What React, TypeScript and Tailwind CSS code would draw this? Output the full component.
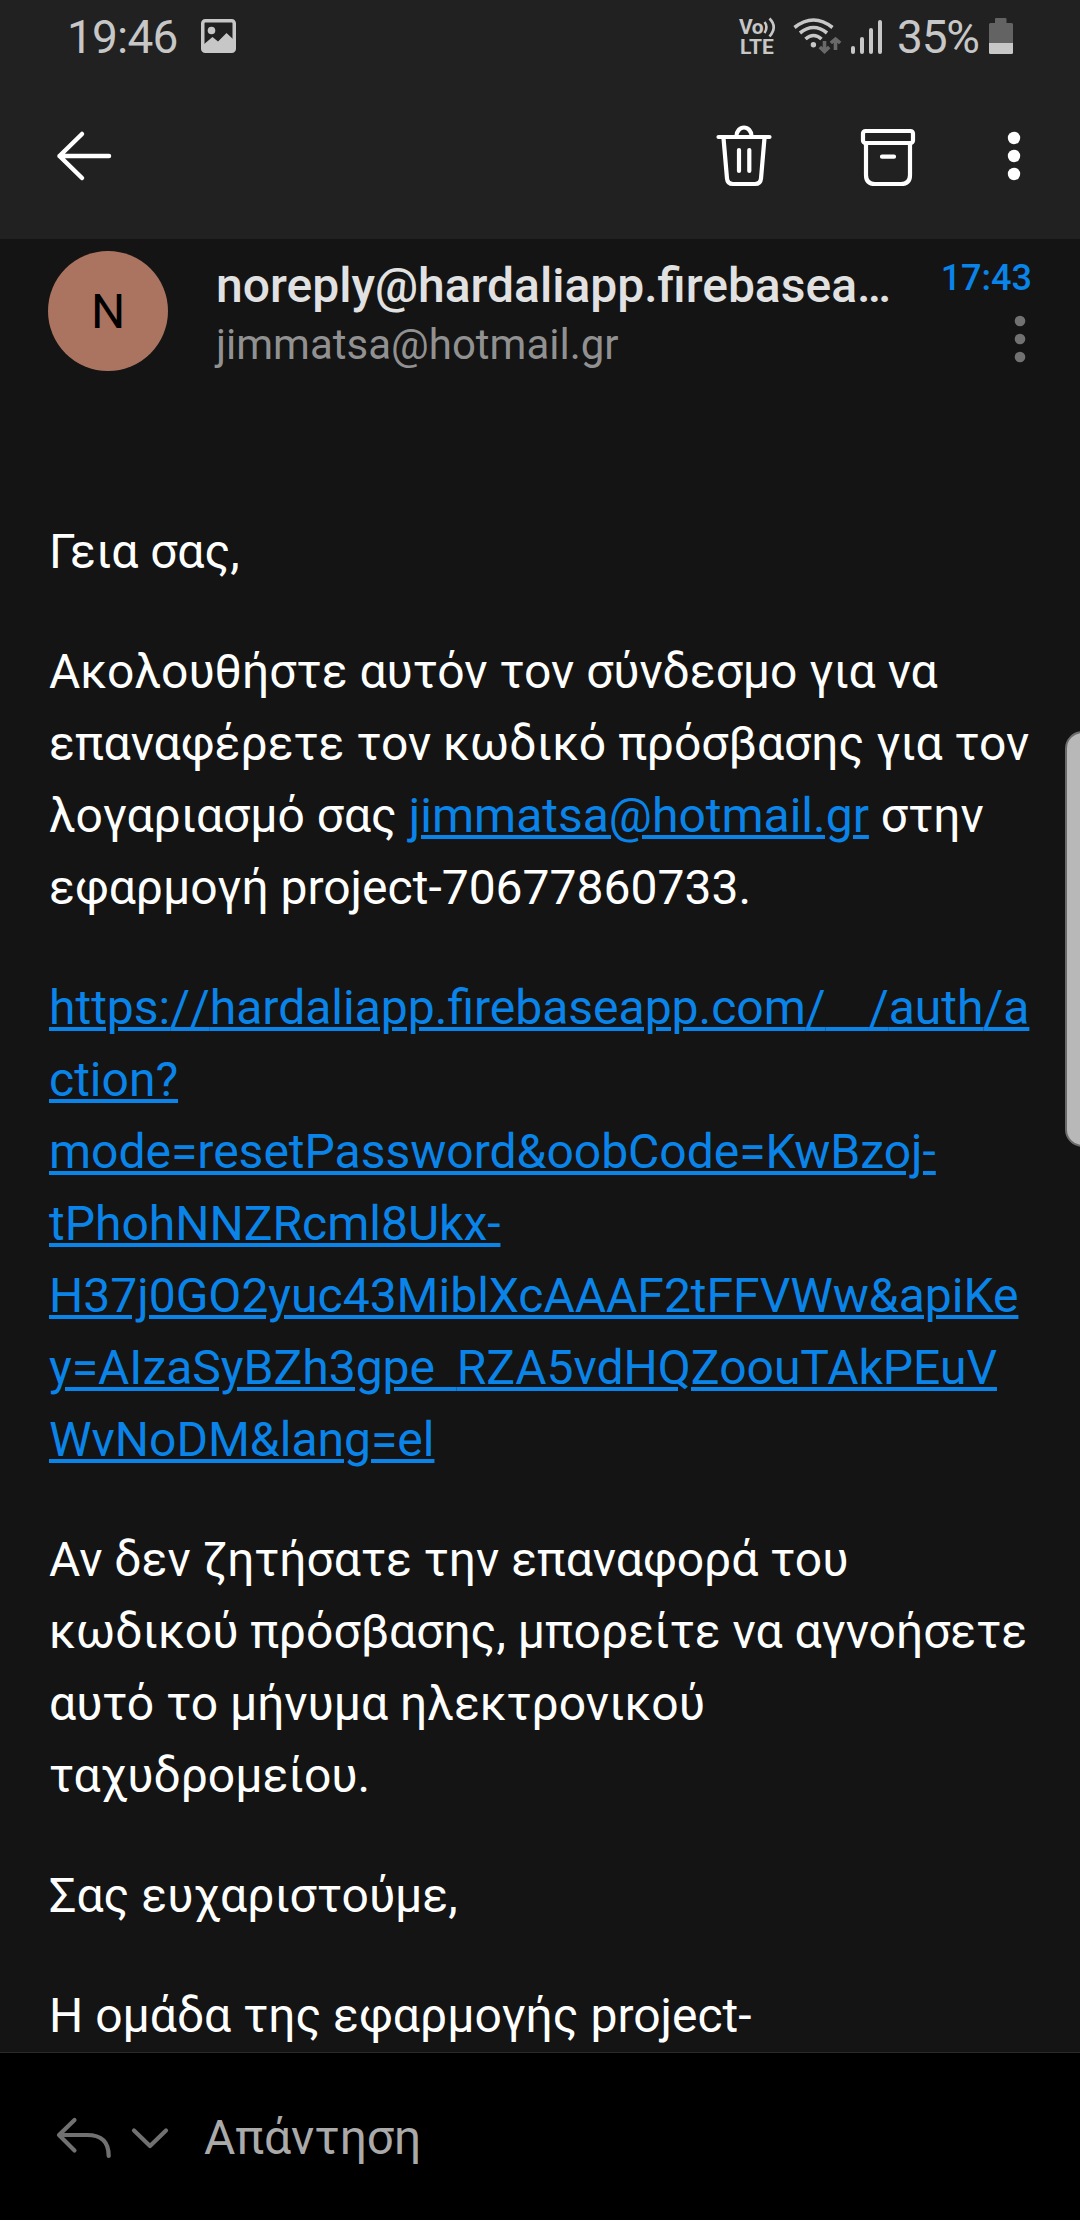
import React from "react";

function StatusBar() {
  return (
    <div className="flex h-[76px] items-start text-[#c7c7c7]">
      <span className="ml-[67px] mt-[10px] w-[134px] text-[46px] leading-[54px] tracking-[-0.800px]">19:46</span>
      <svg className="mt-[19px]" width="35" height="34" viewBox="0 0 35 34">
        <rect x="1.75" y="1.75" width="31.5" height="30.5" rx="2.5" fill="none" stroke="#c7c7c7" strokeWidth="3.5" />
        <circle cx="10.5" cy="11.5" r="3.8" fill="#c7c7c7" />
        <path d="M2 26L11.500 18L17 22.500L25.500 14L33 21V32H2Z" fill="#c7c7c7" />
      </svg>
      <div className="ml-[503px] mt-[17px] w-[54px]">
        <div className="flex h-[21px] items-start">
          <span className="mt-px w-[24px] text-[21px] font-bold leading-[19px] tracking-[-0.600px]">Vo</span>
          <svg width="13" height="21" viewBox="0 0 13 21" fill="none" stroke="#c7c7c7" strokeWidth="2.6">
            <path d="M1.500 5Q5.500 10 1.500 16" />
            <path d="M6.500 1.500Q14.900 10 6.500 19.500" />
          </svg>
        </div>
        <div className="ml-px text-[21px] font-bold leading-[18px]">LTE</div>
      </div>
      <svg className="mt-[17px]" width="50" height="38" viewBox="0 0 50 38" fill="none" stroke="#c7c7c7" strokeWidth="3.6">
        <path d="M1.500 10.500Q20.500 -4.500 39.500 10.500" />
        <path d="M7 16Q20.500 5 34 16" />
        <path d="M12.500 22Q20.500 15 28.500 22" />
        <circle cx="20.400" cy="27.700" r="2.700" fill="#c7c7c7" stroke="none" />
        <path d="M31.500 24V34M26.800 30L31.500 34.500L36.200 30" stroke="#696969" />
        <path d="M42.500 33V23M37.800 26L42.500 22L47.200 26" stroke="#696969" />
      </svg>
      <svg className="ml-[7px] mt-[19px]" width="33" height="36" viewBox="0 0 33 36" stroke="#c7c7c7" strokeWidth="4" strokeLinecap="round">
        <path d="M3 29V33M12 20V33M21 11V33M30 3V33" />
      </svg>
      <span className="ml-[14px] mt-[10px] w-[92px] text-[46px] leading-[54px] tracking-[-1.200px]">35%</span>
      <svg className="mt-[18px] shrink-0" width="24" height="36" viewBox="0 0 24 36">
        <path d="M0 25V6.500Q0 5 1.500 5H6V1Q6 0 7 0H16.500Q17.500 0 17.500 1V5H22.500Q24 5 24 6.500V25Z" fill="#636363" />
        <path d="M0 25H24V34.500Q24 36 22.500 36H1.500Q0 36 0 34.500Z" fill="#c7c7c7" />
      </svg>
    </div>
  );
}

function Toolbar() {
  return (
    <div className="flex h-[163px] items-start pt-[46px]">
      <svg className="ml-[52px]" width="64" height="68" viewBox="52 122 64 68" fill="none" stroke="#fff" strokeWidth="4.500" strokeLinecap="round" strokeLinejoin="round">
        <path d="M109 156H59.500M82 134L59.500 156L82 178" />
      </svg>
      <svg className="ml-[596px]" width="64" height="68" viewBox="712 122 64 68" fill="none" stroke="#fff" strokeWidth="4.200" strokeLinecap="round" strokeLinejoin="round">
        <path d="M718.500 137H769.500M736.500 136A7.500 8.500 0 0 1 751.500 136M723.500 138L727 178.500Q727.500 184 733 184H755Q760.500 184 761 178.500L764.500 138M739 150V171M749.300 150V171" />
      </svg>
      <svg className="ml-[80px]" width="64" height="68" viewBox="856 122 64 68" fill="none" stroke="#fff" strokeWidth="4.200" strokeLinecap="round" strokeLinejoin="round">
        <rect x="863" y="131" width="50" height="12" rx="2.500" />
        <path d="M866 143V175Q866 184 875 184H901Q910 184 910 175V143M882 156.700H894" />
      </svg>
      <svg className="ml-[84px]" width="20" height="68" viewBox="1004 122 20 68" fill="#fff">
        <circle cx="1014" cy="138" r="6.200" />
        <circle cx="1014" cy="156" r="6.200" />
        <circle cx="1014" cy="174" r="6.200" />
      </svg>
    </div>
  );
}

function SenderRow() {
  return (
    <div className="flex h-[277px] items-start pl-[48px] pr-[48px] pt-[12px]">
      <div className="flex size-[120px] shrink-0 items-center justify-center rounded-full bg-[#ab7460] pt-[2px] text-[48px] text-black">N</div>
      <div className="ml-[48px] mt-[7px] w-[690px] shrink-0">
        <div className="whitespace-nowrap text-[48px] font-medium leading-[56px] text-[#e1e1e1]">noreply@hardaliapp.firebasea…</div>
        <div className="mt-[6px] text-[42px] leading-[50px] text-[#919191]">jimmatsa@hotmail.gr</div>
      </div>
      <div className="ml-auto mt-[6px] flex flex-col items-end">
        <span className="text-[36px] font-medium leading-[42px] text-[#0a84e8]">17:43</span>
        <svg className="mr-[6px] mt-[11px]" width="12" height="54" viewBox="0 0 12 54" fill="#717171">
          <circle cx="6" cy="11" r="5.300" />
          <circle cx="6" cy="29" r="5.300" />
          <circle cx="6" cy="47" r="5.300" />
        </svg>
      </div>
    </div>
  );
}

const LINK = "text-[#0a84e8] underline decoration-[4px] underline-offset-[3px]";

function MessageBody() {
  return (
    <div className="flex flex-col gap-[48px] whitespace-nowrap pl-[49px] text-[48px] leading-[72px] text-white">
      <p>Γεια σας,</p>
      <p>
        Ακολουθήστε αυτόν τον σύνδεσμο για να<br />
        επαναφέρετε τον κωδικό πρόσβασης για τον<br />
        λογαριασμό σας <a className={LINK}>jimmatsa@hotmail.gr</a> στην<br />
        εφαρμογή project-70677860733.
      </p>
      <p className={LINK}>
        https:<span className="[font-kerning:none]">//</span>hardaliapp.firebaseapp.com<span className="[font-kerning:none] [text-decoration-skip-ink:none]">/<span className="text-transparent">__</span>/</span>auth<span className="[font-kerning:none]">/a</span><br />
        ction?<br />
        mode=resetPassword&amp;oobCode=KwBzoj-<br />
        tPhohNNZRcml8Ukx-<br />
        H37j0GO2yuc43MiblXcAAAF2tFFVWw&amp;apiKe<br />
        y=AIzaSyBZh3gpe<span className="text-transparent [text-decoration-skip-ink:none]">_</span>RZA5vdHQZoouTAkPEuV<br />
        WvNoDM&amp;lang=el
      </p>
      <p>
        Αν δεν ζητήσατε την επαναφορά του<br />
        κωδικού πρόσβασης, μπορείτε να αγνοήσετε<br />
        αυτό το μήνυμα ηλεκτρονικού<br />
        ταχυδρομείου.
      </p>
      <p>Σας ευχαριστούμε,</p>
      <p>Η ομάδα της εφαρμογής project-</p>
    </div>
  );
}

function ReplyBar() {
  return (
    <footer className="flex h-[168px] shrink-0 items-start border-t border-[#2b2b2b] bg-black">
      <svg className="ml-[52px] mt-[59px]" width="62" height="52" viewBox="52 2112 62 52" fill="none" stroke="#717171" strokeWidth="4.200" strokeLinecap="round" strokeLinejoin="round">
        <path d="M74.500 2120L59 2135L74.500 2150.500M59 2135H87C101 2135 108.700 2141 108.700 2156" />
      </svg>
      <svg className="ml-[14px] mt-[59px]" width="44" height="52" viewBox="128 2112 44 52" fill="none" stroke="#717171" strokeWidth="4.200" strokeLinecap="round" strokeLinejoin="round">
        <path d="M134 2130.500L150 2146L166 2130.500" />
      </svg>
      <span className="ml-[32px] mt-[57px] text-[48px] leading-[56px] text-[#aaaaaa]">Απάντηση</span>
    </footer>
  );
}

export default function App() {
  return (
    <div className="relative flex h-[2220px] w-[1080px] flex-col overflow-hidden bg-[#141414] font-['Roboto',sans-serif]">
      <header className="shrink-0 bg-[#212121]">
        <StatusBar />
        <Toolbar />
      </header>
      <main className="min-h-0 flex-1 overflow-hidden">
        <SenderRow />
        <MessageBody />
      </main>
      <ReplyBar />
      <div className="absolute right-[-20px] top-[731px] h-[416px] w-[35px] rounded-[20px] border-2 border-[#6b6b6b] bg-[#b8b8b8]" />
    </div>
  );
}
